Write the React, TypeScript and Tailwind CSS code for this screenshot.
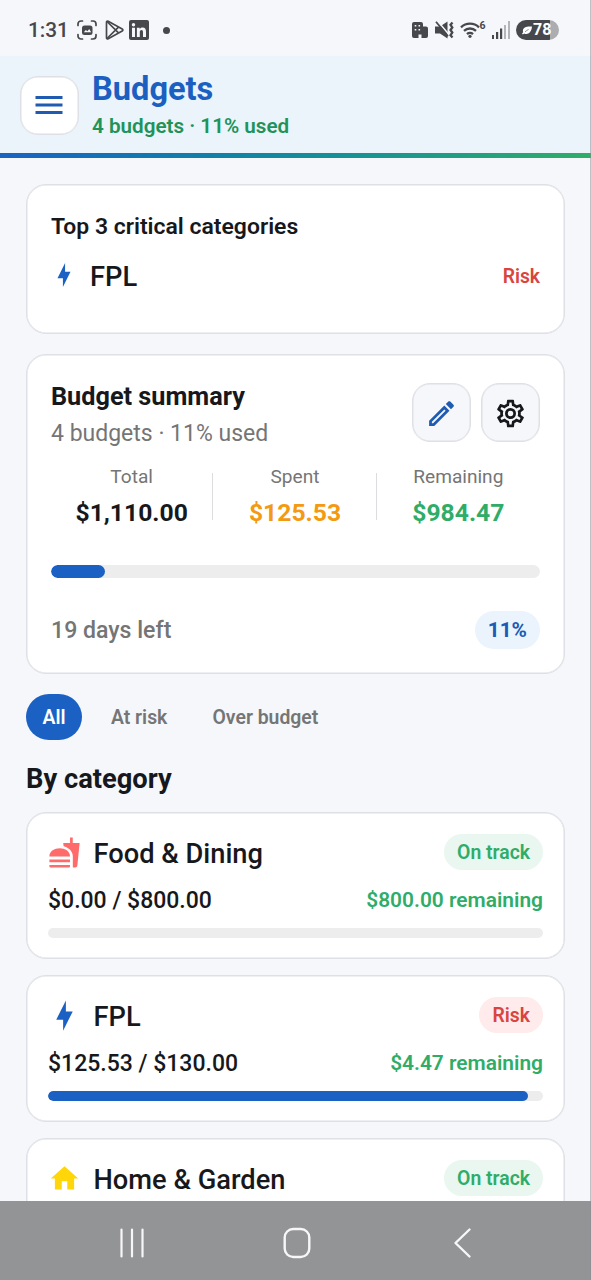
import type { ReactNode } from "react";
import { MdFastfood, MdMenu, MdOutlineEdit } from "react-icons/md";

const BOLT = "M11 15H6L13 1V9H18L11 23V15Z";
const HOME = "M10,20V14H14V20H19V12H22L12,3L2,12H5V20H10Z";
const COG =
  "M12,8A4,4 0 0,1 16,12A4,4 0 0,1 12,16A4,4 0 0,1 8,12A4,4 0 0,1 12,8M12,10A2,2 0 0,0 10,12A2,2 0 0,0 12,14A2,2 0 0,0 14,12A2,2 0 0,0 12,10M10,22C9.75,22 9.54,21.82 9.5,21.58L9.13,18.93C8.5,18.68 7.96,18.34 7.44,17.94L4.95,18.95C4.73,19.03 4.46,18.95 4.34,18.73L2.34,15.27C2.21,15.05 2.27,14.78 2.46,14.63L4.57,12.97L4.5,12L4.57,11L2.46,9.37C2.27,9.22 2.21,8.95 2.34,8.73L4.34,5.27C4.46,5.05 4.73,4.96 4.95,5.05L7.44,6.05C7.96,5.66 8.5,5.32 9.13,5.07L9.5,2.42C9.54,2.18 9.75,2 10,2H14C14.25,2 14.46,2.18 14.5,2.42L14.87,5.07C15.5,5.32 16.04,5.66 16.56,6.05L19.05,5.05C19.27,4.96 19.54,5.05 19.66,5.27L21.66,8.73C21.79,8.95 21.73,9.22 21.54,9.37L19.43,11L19.5,12L19.43,13L21.54,14.63C21.73,14.78 21.79,15.05 21.66,15.27L19.66,18.73C19.54,18.95 19.27,19.04 19.05,18.95L16.56,17.95C16.04,18.34 15.5,18.68 14.87,18.93L14.5,21.58C14.46,21.82 14.25,22 14,22H10M11.25,4L10.88,6.61C9.68,6.86 8.62,7.5 7.85,8.39L5.44,7.35L4.69,8.65L6.8,10.2C6.4,11.37 6.4,12.64 6.8,13.8L4.68,15.36L5.43,16.66L7.86,15.62C8.63,16.5 9.68,17.14 10.87,17.38L11.24,20H12.76L13.13,17.39C14.32,17.14 15.37,16.5 16.14,15.62L18.57,16.66L19.32,15.36L17.2,13.81C17.6,12.64 17.6,11.37 17.2,10.2L19.31,8.65L18.56,7.35L16.15,8.39C15.38,7.5 14.32,6.86 13.12,6.62L12.75,4H11.25Z";

function Glyph({ d, className }: { d: string; className: string }) {
  return (
    <svg viewBox="0 0 24 24" fill="currentColor" className={className}>
      <path d={d} />
    </svg>
  );
}

function StatusBar() {
  return (
    <div className="flex h-14 shrink-0 items-center justify-between pt-1 pr-[32px] pl-[28px] text-[#47484c]">
      <div className="flex items-center">
        <span className="w-[49px] text-[20.8px] leading-6 font-medium">1:31</span>
        <svg viewBox="0 0 20 20" className="h-5 w-5" fill="none" stroke="currentColor" strokeWidth="1.7" strokeLinecap="round">
          <path d="M1 5.5V4a3 3 0 0 1 3-3h1.5M14.500 1H16a3 3 0 0 1 3 3v1.500M19 14.500V16a3 3 0 0 1-3 3h-1.500M5.500 19H4a3 3 0 0 1-3-3v-1.500" />
          <rect x="5" y="5.500" width="10.500" height="9.500" rx="2.500" fill="currentColor" stroke="none" />
          <path d="M6.800 12.200l2-2.200 1.600 1.200 1.800-2.200 2 3.200z" fill="#f5f7fb" stroke="none" />
        </svg>
        <svg viewBox="0 0 19 20" className="ml-2 h-5 w-[19px]" fill="none" stroke="currentColor" strokeWidth="1.700" strokeLinejoin="round">
          <path d="M1.500 2.300v15.400c0 1 .8 1.500 1.700 1l14-7.600c.9-.5.900-1.700 0-2.200l-14-7.600c-.9-.5-1.700 0-1.700 1z" />
          <path d="M2 1.500l11.500 11.300M2 18.500L13.500 7.200" />
        </svg>
        <svg viewBox="0 0 20 20" className="ml-[5px] h-5 w-5">
          <rect width="20" height="20" rx="2" fill="currentColor" />
          <g fill="#f5f7fb">
            <circle cx="4.500" cy="4.700" r="1.700" />
            <path d="M3 7.700h3V17H3zM7.900 7.700h2.800V9c.5-.9 1.500-1.500 2.900-1.500 2.700 0 3.400 1.700 3.400 4.200V17h-3v-4.700c0-1.200-.2-2.300-1.500-2.300s-1.700 1-1.700 2.200V17h-2.900z" />
          </g>
        </svg>
        <span className="ml-[14px] h-[7px] w-[7px] rounded-full bg-current" />
      </div>
      <div className="flex items-center">
        <svg viewBox="0 0 16 16" className="h-4 w-4">
          <path fill="currentColor" d="M2 0h7a2 2 0 0 1 2 2v2.500h3a2 2 0 0 1 2 2V14a2 2 0 0 1-2 2H9.500v-3.500h-3V16H2a2 2 0 0 1-2-2V2a2 2 0 0 1 2-2z" />
          <path fill="#f5f7fb" d="M2.700 3h1.600v1.600H2.700zM6.500 3h1.600v1.600H6.500zM2.700 7h1.600v1.600H2.700zM6.500 7h1.600v1.600H6.500z" />
        </svg>
        <svg viewBox="0 0 19 18" className="ml-[7px] h-[18px] w-[19px]">
          <path fill="currentColor" d="M0 5.500h5l7.500-5v17l-7.500-5H0z" />
          <path d="M2.500 0l11 13" stroke="#f5f7fb" strokeWidth="1.600" />
          <path d="M1 .8l12 14.500" stroke="currentColor" strokeWidth="1.800" />
          <path d="M17.500 1.500l-2 2.300 1.800 2.600-1.800 2.600 1.800 2.600-1.800 2.600 2 2.300" stroke="currentColor" strokeWidth="2.300" fill="none" />
        </svg>
        <svg viewBox="0 0 20 16" className="ml-[6px] h-4 w-5" fill="none" stroke="currentColor" strokeWidth="2.300">
          <path d="M1 5.300a13 13 0 0 1 18 0M4 8.900a8.700 8.700 0 0 1 12 0M7 12.100a4.400 4.400 0 0 1 6 0" />
          <circle cx="10" cy="14.300" r="1.600" fill="currentColor" stroke="none" />
        </svg>
        <span className="-mt-2 w-[7px] text-[10.5px] leading-3 font-bold">6</span>
        <svg viewBox="0 0 18 18" className="ml-[5px] h-[18px] w-[18px]">
          <path fill="currentColor" d="M0 14h2v4H0zM4 11h2.200v7H4zM8 7.500h2.200V18H8z" />
          <path fill="#b4b5b9" d="M12 4h2v14h-2zM16 0h2v18h-2z" />
        </svg>
        <div className="ml-[6.5px] flex h-5 w-[43px] items-center rounded-full bg-linear-to-r from-[#47484c] from-79% to-[#acadb1] to-79% pl-[6px]">
          <svg viewBox="0 0 10 9" className="h-[9px] w-[10px]">
            <path fill="#fff" d="M10 .5C5 0 1.200 1 .9 4.300c-.1.700 0 1.300.3 1.900L0 7.500l.9.900 1.300-1C5.500 9 9.500 7 10 .5z" />
            <path d="M3 6C4.300 4.700 5.300 4 6.600 3.400" stroke="#47484c" strokeWidth=".6" fill="none" />
          </svg>
          <span className="ml-px text-[16px] leading-5 font-bold text-white">78</span>
        </div>
      </div>
    </div>
  );
}

function Card({ className, children }: { className: string; children: ReactNode }) {
  return (
    <section className={`rounded-[20px] border border-[#dfe0e5] bg-white shadow-[inset_0_0_0_0.5px_#dfe0e5] ${className}`}>
      {children}
    </section>
  );
}

function Stat({ label, value, color, last }: { label: string; value: string; color: string; last?: boolean }) {
  return (
    <div className="relative flex flex-1 flex-col items-center">
      <span className="text-[19.1px] leading-7 text-[#757575]">{label}</span>
      <span className={`mt-[6px] text-[24.7px] leading-8 font-bold ${color}`}>{value}</span>
      {!last && <span className="absolute top-[10px] right-0 h-[47px] w-px bg-[#dcdde1]" />}
    </div>
  );
}

interface Category {
  name: string;
  icon: ReactNode;
  risk?: boolean;
  usage?: { amount: string; left: string; percent: number };
}

const categories: Category[] = [
  {
    name: "Food & Dining",
    icon: <MdFastfood className="size-[33px] text-[#ff6b6b]" />,
    usage: { amount: "$0.00 / $800.00", left: "$800.00 remaining", percent: 0 },
  },
  {
    name: "FPL",
    icon: <Glyph d={BOLT} className="size-[33px] text-[#1b61c3]" />,
    risk: true,
    usage: { amount: "$125.53 / $130.00", left: "$4.47 remaining", percent: 97 },
  },
  { name: "Home & Garden", icon: <Glyph d={HOME} className="size-[33px] text-[#ffd60a]" /> },
];

function CategoryCard({ name, icon, risk, usage }: Category) {
  return (
    <Card className="h-[147px] shrink-0 px-[21px] pt-[21px]">
      <div className="flex h-9 items-center">
        {icon}
        <h3 className="ml-[12.5px] flex-1 pt-[3px] text-[27.25px] leading-9 font-medium">{name}</h3>
        <span
          className={`h-9 rounded-full px-[13px] text-[19.4px] leading-[38px] font-semibold ${
            risk ? "bg-[#ffebeb] text-[#d9443f]" : "bg-[#e9f7f0] text-[#2fad68]"
          }`}
        >
          {risk ? "Risk" : "On track"}
        </span>
      </div>
      {usage && (
        <>
          <div className="mt-[14px] flex h-8 items-center justify-between">
            <span className="pt-[2px] text-[23px] font-medium">{usage.amount}</span>
            <span className="pt-[2px] text-[20.9px] font-semibold text-[#2fad68]">{usage.left}</span>
          </div>
          <div className="mt-[12px] h-[10px] overflow-hidden rounded-[5px] bg-[#ededed]">
            <div className="h-full rounded-full bg-[#1b61c3]" style={{ width: `${usage.percent}%` }} />
          </div>
        </>
      )}
    </Card>
  );
}

function SquareButton({ className, children }: { className: string; children: ReactNode }) {
  return (
    <button
      className={`flex size-[59px] items-center justify-center rounded-[18px] border border-[#dfe0e5] shadow-[inset_0_0_0_0.5px_#dfe0e5] ${className}`}
    >
      {children}
    </button>
  );
}

export default function App() {
  return (
    <div className="relative flex h-[1280px] w-[591px] flex-col overflow-hidden bg-[#f5f7fb] font-['Roboto',sans-serif] whitespace-nowrap text-[#17181b]">
      <StatusBar />
      <header className="flex h-[97px] shrink-0 items-start bg-[#ebf3fb] pl-[20px]">
        <SquareButton className="mt-[19.5px] bg-white">
          <MdMenu className="mr-px size-9 text-[#1f5bb0]" />
        </SquareButton>
        <div className="ml-[13px] flex flex-col">
          <h1 className="mt-[13px] text-[32.6px] leading-10 font-bold text-[#1b5fc1]">Budgets</h1>
          <span className="mt-[3px] text-[20.65px] leading-7 font-semibold text-[#20935a]">4 budgets · 11% used</span>
        </div>
      </header>
      <div className="h-[5px] shrink-0 bg-linear-to-r from-[#1b61c3] to-[#2fad68]" />

      <main className="flex min-h-0 flex-1 flex-col overflow-hidden px-[26px] pt-[26px]">
        <Card className="h-[150px] shrink-0 px-[24px] pt-[26px]">
          <h2 className="text-[22.95px] leading-8 font-semibold">Top 3 critical categories</h2>
          <div className="mt-[16px] flex h-9 items-center">
            <Glyph d={BOLT} className="mb-[4px] size-[26px] text-[#1b61c3]" />
            <span className="ml-[13px] flex-1 text-[27.3px] font-medium">FPL</span>
            <span className="text-[19.3px] font-semibold text-[#d9443f]">Risk</span>
          </div>
        </Card>

        <Card className="mt-5 h-[320px] shrink-0 px-[24px] pt-[28px]">
          <div className="flex justify-between">
            <div className="flex flex-col">
              <h2 className="-mt-[2px] text-[25.25px] leading-8 font-bold">Budget summary</h2>
              <span className="mt-[5px] text-[23px] leading-8 text-[#757575]">4 budgets · 11% used</span>
            </div>
            <div className="flex gap-[10px]">
              <SquareButton className="bg-[#f5f7fb]">
                <MdOutlineEdit className="mt-px size-[33px] text-[#1f5bb0]" />
              </SquareButton>
              <SquareButton className="bg-[#f5f7fb]">
                <Glyph d={COG} className="mt-px size-[33px] text-[#17181b]" />
              </SquareButton>
            </div>
          </div>
          <div className="-ml-px flex pt-[13px]">
            <Stat label="Total" value="$1,110.00" color="text-[#17181b]" />
            <Stat label="Spent" value="$125.53" color="text-[#f39a12]" />
            <Stat label="Remaining" value="$984.47" color="text-[#2fad68]" last />
          </div>
          <div className="mt-[36px] h-[13px] overflow-hidden rounded-full bg-[#ededed]">
            <div className="h-full w-[11%] rounded-full bg-[#1b61c3]" />
          </div>
          <div className="mt-[33px] flex h-[38px] items-center justify-between">
            <span className="pt-[3px] text-[23.1px] font-medium text-[#757575]">19 days left</span>
            <span className="h-[38px] rounded-full bg-[#ebf3fc] px-[13px] text-[20.8px] leading-[39px] font-bold text-[#1b5bb5]">11%</span>
          </div>
        </Card>

        <div className="mt-5 flex h-[46px] shrink-0 items-center text-[19.4px] font-semibold text-[#757575]">
          <span className="h-[46px] w-[56px] rounded-full bg-[#1b61c3] text-center leading-[48px] text-white">All</span>
          <span className="ml-[29px] w-[73px] pt-[2px]">At risk</span>
          <span className="ml-[28.5px] pt-[2px]">Over budget</span>
        </div>

        <h2 className="mt-[21px] text-[27.3px] leading-9 font-bold">By category</h2>
        <div className="mt-[15px] flex flex-col gap-4">
          {categories.map((c) => (
            <CategoryCard key={c.name} {...c} />
          ))}
        </div>
      </main>

      <nav className="flex h-[79px] shrink-0 items-center bg-[#939496] pt-[5px] pl-[118.5px] text-[#f7f7f8]">
        <svg viewBox="0 0 26 32" className="h-8 w-[26px]" stroke="currentColor" strokeWidth="2.200" strokeLinecap="round">
          <path d="M2.500 2.500v27M13 2.500v27M23.500 2.500v27" />
        </svg>
        <svg viewBox="0 0 28 32" className="ml-[138px] h-8 w-7" fill="none" stroke="currentColor" strokeWidth="2.400">
          <rect x="1.700" y="2" width="24.600" height="28" rx="8.500" />
        </svg>
        <svg viewBox="0 0 20 32" className="ml-[142px] h-8 w-5" fill="none" stroke="currentColor" strokeWidth="2.400" strokeLinecap="round" strokeLinejoin="round">
          <path d="M16.500 2.500L2.500 16l14 13.500" />
        </svg>
      </nav>
      <div className="absolute top-0 right-0 h-full w-px bg-[#8a8b90]/50" />
    </div>
  );
}
